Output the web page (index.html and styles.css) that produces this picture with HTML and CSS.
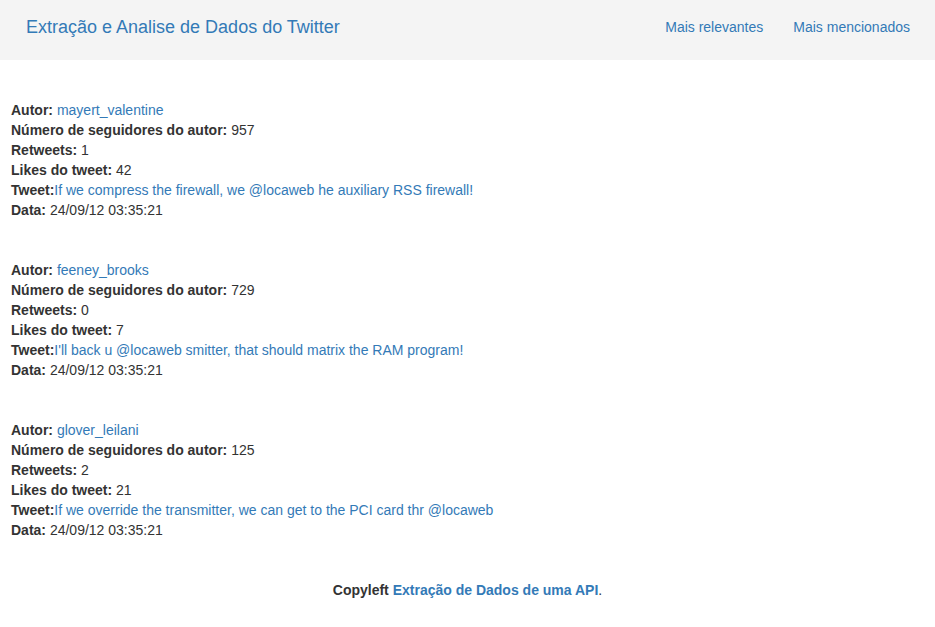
FILE: index.html
```html
<!DOCTYPE html>
<html lang="pt">
<head>
<meta charset="utf-8">
<title>Extração e Analise de Dados do Twitter</title>
<link rel="stylesheet" href="styles.css">
</head>
<body>
<nav class="navbar">
  <a class="brand" href="#">Extração e Analise de Dados do Twitter</a>
  <div class="nav-links">
    <a href="#">Mais relevantes</a>
    <a href="#">Mais mencionados</a>
  </div>
</nav>
<main class="content">
  <section class="tweet">
    <div><b>Autor:</b> <a href="#">mayert_valentine</a></div>
    <div><b>Número de seguidores do autor:</b> 957</div>
    <div><b>Retweets:</b> 1</div>
    <div><b>Likes do tweet:</b> 42</div>
    <div><b>Tweet:</b><a href="#">If we compress the firewall, we @locaweb he auxiliary RSS firewall!</a></div>
    <div><b>Data:</b> 24/09/12 03:35:21</div>
  </section>
  <section class="tweet">
    <div><b>Autor:</b> <a href="#">feeney_brooks</a></div>
    <div><b>Número de seguidores do autor:</b> 729</div>
    <div><b>Retweets:</b> 0</div>
    <div><b>Likes do tweet:</b> 7</div>
    <div><b>Tweet:</b><a href="#">I'll back u @locaweb smitter, that should matrix the RAM program!</a></div>
    <div><b>Data:</b> 24/09/12 03:35:21</div>
  </section>
  <section class="tweet">
    <div><b>Autor:</b> <a href="#">glover_leilani</a></div>
    <div><b>Número de seguidores do autor:</b> 125</div>
    <div><b>Retweets:</b> 2</div>
    <div><b>Likes do tweet:</b> 21</div>
    <div><b>Tweet:</b><a href="#">If we override the transmitter, we can get to the PCI card thr @locaweb</a></div>
    <div><b>Data:</b> 24/09/12 03:35:21</div>
  </section>
</main>
<footer class="footer">
  <b>Copyleft <a href="#">Extração de Dados de uma API</a></b>.
</footer>
</body>
</html>
```
FILE: styles.css
```css
html, body {
  margin: 0;
  padding: 0;
}
body {
  font-family: "Liberation Sans", Arial, sans-serif;
  font-size: 14px;
  line-height: 20px;
  color: #333;
  background: #fff;
}
a {
  color: #337ab7;
  text-decoration: none;
}
b {
  font-weight: bold;
}
.navbar {
  height: 60px;
  background: #f4f4f4;
  display: flex;
  align-items: flex-start;
  justify-content: space-between;
  padding: 0 25px 0 26px;
  box-sizing: border-box;
}
.brand {
  font-size: 18px;
  line-height: 20px;
  padding-top: 17px;
}
.nav-links {
  display: flex;
  gap: 30px;
  padding-top: 17px;
}
.content {
  padding: 40px 11px 0;
  display: flex;
  flex-direction: column;
  gap: 40px;
}
.footer {
  text-align: center;
  padding-top: 40px;
}
```
